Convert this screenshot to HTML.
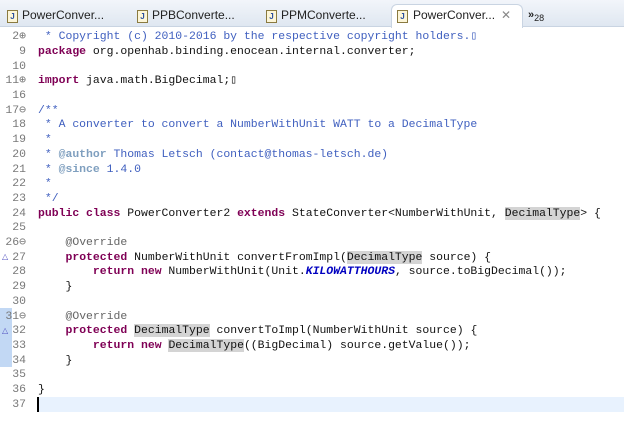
<!DOCTYPE html>
<html><head><meta charset="utf-8"><style>
body{margin:0;width:624px;height:445px;overflow:hidden;background:#fff;font-family:"Liberation Sans",sans-serif;position:relative}
.bar{position:absolute;left:0;top:0;width:624px;height:26px;background:linear-gradient(#f2f5fa,#dfe7f1);border-bottom:1px solid #c9d4e2}
.tab{position:absolute;top:5px;font-size:12px;color:#222;height:20px;line-height:20px}
.ic{position:absolute;top:4px;width:9px;height:11px;border:1px solid #8a7a40;background:#fdf6d8;font-size:8px;line-height:11px;text-align:center;color:#2a4fa0;font-weight:bold}
.act{position:absolute;left:391px;top:4px;width:130px;height:23px;background:#fff;border:1px solid #c9d4e2;border-bottom:none;border-radius:6px 6px 0 0}
.code{position:absolute;left:0;top:0;font-family:"Liberation Mono",monospace;font-size:11.45px;white-space:pre;color:#111}
.r{position:absolute;left:0;height:15px;line-height:15px}
.n{position:absolute;width:26px;text-align:right;color:#787878}
.t{position:absolute;left:38px}
.k{color:#7f0055;font-weight:bold}
.c{color:#3f5fbf}
.g{color:#7f9fbf;font-weight:bold}
.a{color:#646464}
.h{background:#d4d4d4}
.f{color:#0000c0;font-style:italic;font-weight:bold}
</style></head><body>
<div class="bar"></div>
<div class="act"></div>
<div class="ic" style="left:7px;top:10px">J</div><div class="tab" style="left:22px">PowerConver...</div>
<div class="ic" style="left:137px;top:10px">J</div><div class="tab" style="left:152px">PPBConverte...</div>
<div class="ic" style="left:266px;top:10px">J</div><div class="tab" style="left:281px">PPMConverte...</div>
<div class="ic" style="left:397px;top:10px">J</div><div class="tab" style="left:413px">PowerConver...</div>
<div class="tab" style="left:501px;color:#888">✕</div>
<div class="tab" style="left:528px;font-size:11px;font-weight:bold">»<span style="font-size:9px;font-weight:normal;vertical-align:-3px">28</span></div>
<div style="position:absolute;left:0;top:308px;width:12px;height:59px;background:#a8c8f0;opacity:.7"></div>
<div style="position:absolute;left:38px;top:397px;width:586px;height:15px;background:#e8f2fe"></div>
<div style="position:absolute;left:37px;top:397px;width:2px;height:15px;background:#000"></div>
<div class="code">
<div class="r" style="top:29px"><span class="n">2⊕</span><span class="t c"> * Copyright (c) 2010-2016 by the respective copyright holders.▯</span></div>
<div class="r" style="top:44px"><span class="n">9</span><span class="t"><span class="k">package</span> org.openhab.binding.enocean.internal.converter;</span></div>
<div class="r" style="top:59px"><span class="n">10</span></div>
<div class="r" style="top:73px"><span class="n">11⊕</span><span class="t"><span class="k">import</span> java.math.BigDecimal;▯</span></div>
<div class="r" style="top:88px"><span class="n">16</span></div>
<div class="r" style="top:103px"><span class="n">17⊖</span><span class="t c">/**</span></div>
<div class="r" style="top:117px"><span class="n">18</span><span class="t c"> * A converter to convert a NumberWithUnit WATT to a DecimalType</span></div>
<div class="r" style="top:132px"><span class="n">19</span><span class="t c"> *</span></div>
<div class="r" style="top:147px"><span class="n">20</span><span class="t c"> * <span class="g">@author</span> Thomas Letsch (contact@thomas-letsch.de)</span></div>
<div class="r" style="top:162px"><span class="n">21</span><span class="t c"> * <span class="g">@since</span> 1.4.0</span></div>
<div class="r" style="top:176px"><span class="n">22</span><span class="t c"> *</span></div>
<div class="r" style="top:191px"><span class="n">23</span><span class="t c"> */</span></div>
<div class="r" style="top:206px"><span class="n">24</span><span class="t"><span class="k">public class</span> PowerConverter2 <span class="k">extends</span> StateConverter&lt;NumberWithUnit, <span class="h">DecimalType</span>&gt; {</span></div>
<div class="r" style="top:220px"><span class="n">25</span></div>
<div class="r" style="top:235px"><span class="n">26⊖</span><span class="t">    <span class="a">@Override</span></span></div>
<div class="r" style="top:250px"><span class="n">27</span><span class="t">    <span class="k">protected</span> NumberWithUnit convertFromImpl(<span class="h">DecimalType</span> source) {</span></div>
<div class="r" style="top:264px"><span class="n">28</span><span class="t">        <span class="k">return new</span> NumberWithUnit(Unit.<span class="f">KILOWATTHOURS</span>, source.toBigDecimal());</span></div>
<div class="r" style="top:279px"><span class="n">29</span><span class="t">    }</span></div>
<div class="r" style="top:294px"><span class="n">30</span></div>
<div class="r" style="top:309px"><span class="n">31⊖</span><span class="t">    <span class="a">@Override</span></span></div>
<div class="r" style="top:323px"><span class="n">32</span><span class="t">    <span class="k">protected</span> <span class="h">DecimalType</span> convertToImpl(NumberWithUnit source) {</span></div>
<div class="r" style="top:338px"><span class="n">33</span><span class="t">        <span class="k">return new</span> <span class="h">DecimalType</span>((BigDecimal) source.getValue());</span></div>
<div class="r" style="top:353px"><span class="n">34</span><span class="t">    }</span></div>
<div class="r" style="top:367px"><span class="n">35</span></div>
<div class="r" style="top:382px"><span class="n">36</span><span class="t">}</span></div>
<div class="r" style="top:397px"><span class="n">37</span></div>
</div>
<div style="position:absolute;left:2px;top:252px;color:#5050c0;font-size:8px">△</div>
<div style="position:absolute;left:2px;top:326px;color:#5050c0;font-size:8px">△</div>
</body></html>
